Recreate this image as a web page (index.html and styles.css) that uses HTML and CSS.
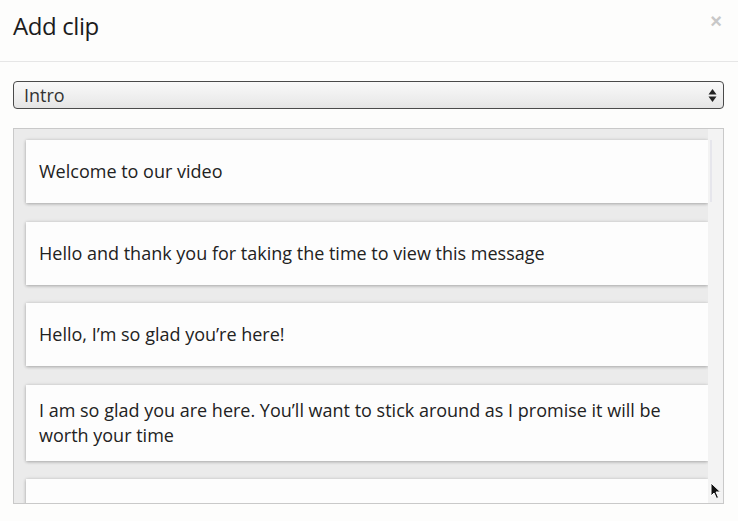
FILE: index.html
```html
<!DOCTYPE html>
<html>
<head>
<meta charset="utf-8">
<link rel="stylesheet" href="styles.css">
</head>
<body>
<div class="modal">
  <div class="modal-header">
    <h1 class="title">Add clip</h1>
    <span class="close">&times;</span>
  </div>
  <div class="modal-body">
    <div class="select">
      <span class="select-value">Intro</span>
      <svg class="select-arrows" width="9" height="15" viewBox="0 0 9 15"><path d="M4.5 1 L8.5 6.5 L0.5 6.5 Z" fill="#222"/><path d="M4.5 14 L8.5 8.5 L0.5 8.5 Z" fill="#222"/></svg>
    </div>
    <div class="list">
      <div class="list-content">
        <div class="card">Welcome to our video</div>
        <div class="card">Hello and thank you for taking the time to view this message</div>
        <div class="card">Hello, I’m so glad you’re here!</div>
        <div class="card">I am so glad you are here. You’ll want to stick around as I promise it will be worth your time</div>
        <div class="card">Thank you so much for joining us today</div>
      </div>
      <div class="scrollbar"><div class="thumb"></div></div>
    </div>
  </div>
  <svg class="cursor" width="12" height="18" viewBox="0 0 12 18"><path d="M1 1 L1 14 L4 11 L6.5 16.5 L8.5 15.5 L6 10 L10.5 10 Z" fill="#111" stroke="#fff" stroke-width="1"/></svg>
</div>
</body>
</html>
```
FILE: styles.css
```css
html, body {
  margin: 0;
  padding: 0;
  background: #fdfdfc;
}
body {
  font-family: "Open Sans", "DejaVu Sans", sans-serif;
  color: #222;
  width: 738px;
  height: 521px;
  overflow: hidden;
}
.modal {
  position: relative;
  height: 521px;
}
.modal-header {
  height: 61px;
  border-bottom: 1px solid #e6e6e6;
  display: flex;
  justify-content: space-between;
  align-items: flex-start;
  padding: 0 15px 0 13px;
}
.title {
  margin: 0;
  font-size: 24px;
  font-weight: 400;
  line-height: 32px;
  padding-top: 10px;
  color: #1c1c1c;
  letter-spacing: -0.4px;
}
.close {
  font-size: 20px;
  font-weight: 700;
  color: #c8c8c8;
  line-height: 20px;
  padding-top: 11px;
  padding-right: 1px;
  font-family: "Liberation Sans", sans-serif;
}
.modal-body {
  padding: 19px 14px 0 13px;
}
.select {
  height: 26px;
  border: 1px solid #4a4a4a;
  border-radius: 4px;
  background: linear-gradient(#f9f9f9, #ececec 70%, #e4e4e4);
  display: flex;
  align-items: center;
  justify-content: space-between;
  padding: 0 6px 0 10px;
}
.select-value {
  font-size: 18px;
  color: #333;
  line-height: 26px;
}
.select-arrows {
  display: block;
}
.list {
  margin-top: 19px;
  height: 374px;
  border: 1px solid #c9c9c9;
  background: #ebebeb;
  display: flex;
  overflow: hidden;
}
.list-content {
  flex: 1;
  padding: 11px 0 0 12px;
  display: flex;
  flex-direction: column;
  gap: 18.5px;
}
.card {
  background: #fdfdfd;
  box-sizing: border-box;
  min-height: 63px;
  display: flex;
  align-items: center;
  padding: 13px 13px;
  font-size: 18px;
  line-height: 25px;
  color: #222;
  box-shadow: 0 1px 3px rgba(0, 0, 0, 0.24), 0 0 4px rgba(0, 0, 0, 0.1);
  flex-shrink: 0;
}
.scrollbar {
  width: 15px;
  background: #f3f3f3;
  position: relative;
}
.thumb {
  position: absolute;
  left: 2px;
  top: 11px;
  width: 2px;
  height: 62px;
  background: #e6e6ec;
}
.cursor {
  position: absolute;
  left: 710px;
  top: 482px;
}
```
